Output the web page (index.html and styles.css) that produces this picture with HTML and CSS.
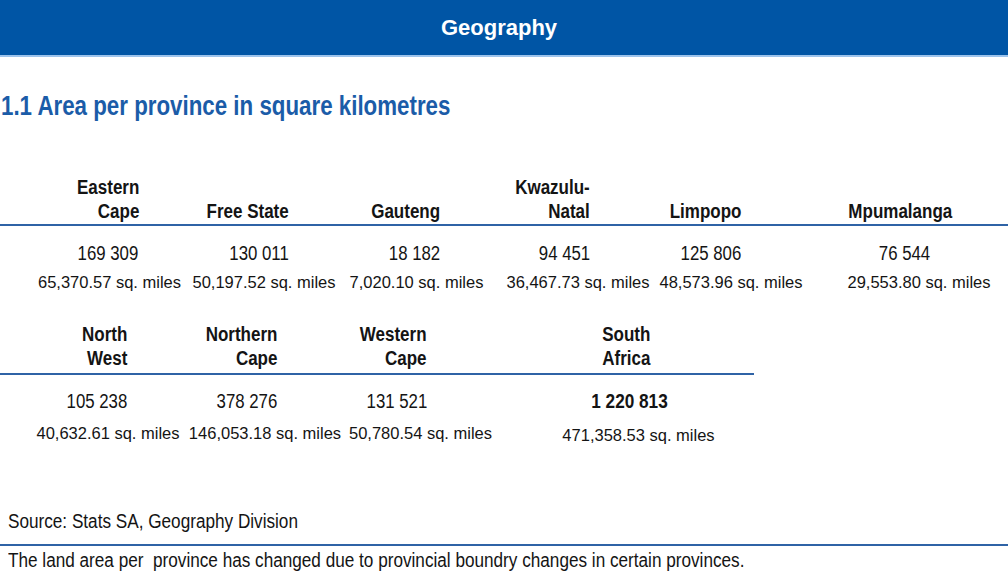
FILE: index.html
```html
<!DOCTYPE html>
<html lang="en">
<head>
<meta charset="utf-8">
<title>Geography</title>
<link rel="stylesheet" href="styles.css">
</head>
<body>
<header class="topbar">
  <h1 class="topbar-title">Geography</h1>
</header>
<main class="content">
  <h2 class="section-title"><span class="nx">1.1 Area per province in square kilometres</span></h2>

  <div class="area-table t1">
    <div class="hd c1"><span class="nx">Eastern<br>Cape</span></div>
    <div class="hd c2"><span class="nx">Free State</span></div>
    <div class="hd c3"><span class="nx">Gauteng</span></div>
    <div class="hd c4"><span class="nx">Kwazulu-<br>Natal</span></div>
    <div class="hd c5"><span class="nx">Limpopo</span></div>
    <div class="hd c6"><span class="nx">Mpumalanga</span></div>

    <div class="val c1"><span class="nx">169 309</span></div>
    <div class="val c2"><span class="nx">130 011</span></div>
    <div class="val c3"><span class="nx">18 182</span></div>
    <div class="val c4"><span class="nx">94 451</span></div>
    <div class="val c5"><span class="nx">125 806</span></div>
    <div class="val c6"><span class="nx">76 544</span></div>

    <div class="mi c1"><span>65,370.57 sq. miles</span></div>
    <div class="mi c2"><span>50,197.52 sq. miles</span></div>
    <div class="mi c3"><span>7,020.10 sq. miles</span></div>
    <div class="mi c4"><span>36,467.73 sq. miles</span></div>
    <div class="mi c5"><span>48,573.96 sq. miles</span></div>
    <div class="mi c6"><span>29,553.80 sq. miles</span></div>
  </div>

  <div class="area-table t2">
    <div class="hd c1"><span class="nx">North<br>West</span></div>
    <div class="hd c2"><span class="nx">Northern<br>Cape</span></div>
    <div class="hd c3"><span class="nx">Western<br>Cape</span></div>
    <div class="hd c4"><span class="nx">South<br>Africa</span></div>

    <div class="val c1"><span class="nx">105 238</span></div>
    <div class="val c2"><span class="nx">378 276</span></div>
    <div class="val c3"><span class="nx">131 521</span></div>
    <div class="val c4 total"><span class="nx">1 220 813</span></div>

    <div class="mi c1"><span>40,632.61 sq. miles</span></div>
    <div class="mi c2"><span>146,053.18 sq. miles</span></div>
    <div class="mi c3"><span>50,780.54 sq. miles</span></div>
    <div class="mi c4"><span>471,358.53 sq. miles</span></div>
  </div>

  <p class="source"><span class="nx">Source: Stats SA, Geography Division</span></p>
  <p class="note"><span class="nx">The land area per&nbsp; province has changed due to provincial boundry changes in certain provinces.</span></p>
</main>
</body>
</html>
```

FILE: styles.css
```css
html, body {
  margin: 0;
  padding: 0;
  background: #ffffff;
}

body {
  width: 1008px;
  height: 584px;
  overflow: hidden;
  font-family: "Liberation Sans", Arial, sans-serif;
  color: #141414;
}

/* narrow (condensed) text rendering */
.nx {
  display: inline-block;
  white-space: nowrap;
  transform: scaleX(0.85);
  transform-origin: right center;
}

.topbar {
  height: 55px;
  background: #0055a5;
  border-bottom: 2px solid #9cc3ec;
  display: flex;
  align-items: center;
  justify-content: center;
}

.topbar-title {
  margin: 0;
  font-weight: bold;
  font-size: 22px;
  color: #ffffff;
  padding-right: 10px;
}

.content {
  display: flex;
  flex-direction: column;
}

.section-title {
  margin: 32px 0 0 1px;
  font-size: 28px;
  line-height: 34px;
  font-weight: bold;
  color: #1b5ca8;
}

.section-title .nx {
  transform: scaleX(0.797);
  transform-origin: left center;
}

.area-table {
  display: grid;
}

.t1 {
  margin-top: 52px;
  grid-template-columns: 187px 154px 151px 172px 134px 210px;
}

.t2 {
  margin-top: 30px;
  width: 754px;
  grid-template-columns: 187px 156px 155px 256px;
}

.hd {
  display: flex;
  flex-direction: column;
  justify-content: flex-end;
  align-items: flex-end;
  text-align: right;
  font-weight: bold;
  font-size: 20px;
  line-height: 24px;
  padding-bottom: 1px;
  border-bottom: 2px solid #2f63a6;
}

.t2 .hd {
  padding-bottom: 3px;
}

.val {
  text-align: right;
  font-size: 20px;
  line-height: 24px;
  padding-top: 15px;
}

.t2 .val {
  padding-top: 14px;
}

.val .nx {
  transform: scaleX(0.84);
}

.mi {
  display: flex;
  justify-content: center;
  margin-top: 7px;
  font-size: 16.5px;
  line-height: 20px;
  white-space: nowrap;
}

.t2 .mi {
  margin-top: 10px;
}

/* table 1 column offsets */
.t1 .hd.c1 { padding-right: 48px; }
.t1 .hd.c2 { padding-right: 52px; }
.t1 .hd.c3 { padding-right: 52px; }
.t1 .hd.c4 { padding-right: 74px; }
.t1 .hd.c5 { padding-right: 57px; }
.t1 .hd.c6 { padding-right: 56px; }

.t1 .val.c1 { padding-right: 49px; }
.t1 .val.c2 { padding-right: 52px; }
.t1 .val.c3 { padding-right: 52px; }
.t1 .val.c4 { padding-right: 74px; }
.t1 .val.c5 { padding-right: 57px; }
.t1 .val.c6 { padding-right: 78px; }

.t1 .mi.c1 { padding-left: 32px; }
.t1 .mi.c6 { padding-left: 32px; }

/* table 2 column offsets */
.t2 .hd.c1, .t2 .val.c1 { padding-right: 60px; }
.t2 .hd.c2, .t2 .val.c2 { padding-right: 66px; }
.t2 .hd.c3, .t2 .val.c3 { padding-right: 71px; }
.t2 .hd.c4 {
  align-items: center;
  text-align: center;
  padding-right: 0;
}
.t2 .hd.c4 .nx {
  transform-origin: center center;
}
.t2 .val.c4 {
  text-align: center;
  padding-right: 0;
  padding-left: 6px;
}
.t2 .val.c4 .nx {
  transform: scaleX(0.86);
  transform-origin: center center;
}
.t2 .mi.c1 { padding-left: 29px; }
.t2 .mi.c4 { padding-left: 25px; }
.t2 .mi.c4 span { padding-top: 2px; }

.total {
  font-weight: bold;
}

.source {
  margin: 64px 0 0 0;
  padding: 0 0 11px 8px;
  font-size: 20px;
  line-height: 24px;
  border-bottom: 2px solid #2f63a6;
}

.note {
  margin: 0;
  padding: 2px 0 0 8px;
  font-size: 20px;
  line-height: 24px;
}

.source .nx,
.note .nx {
  transform: scaleX(0.858);
  transform-origin: left center;
}
```
